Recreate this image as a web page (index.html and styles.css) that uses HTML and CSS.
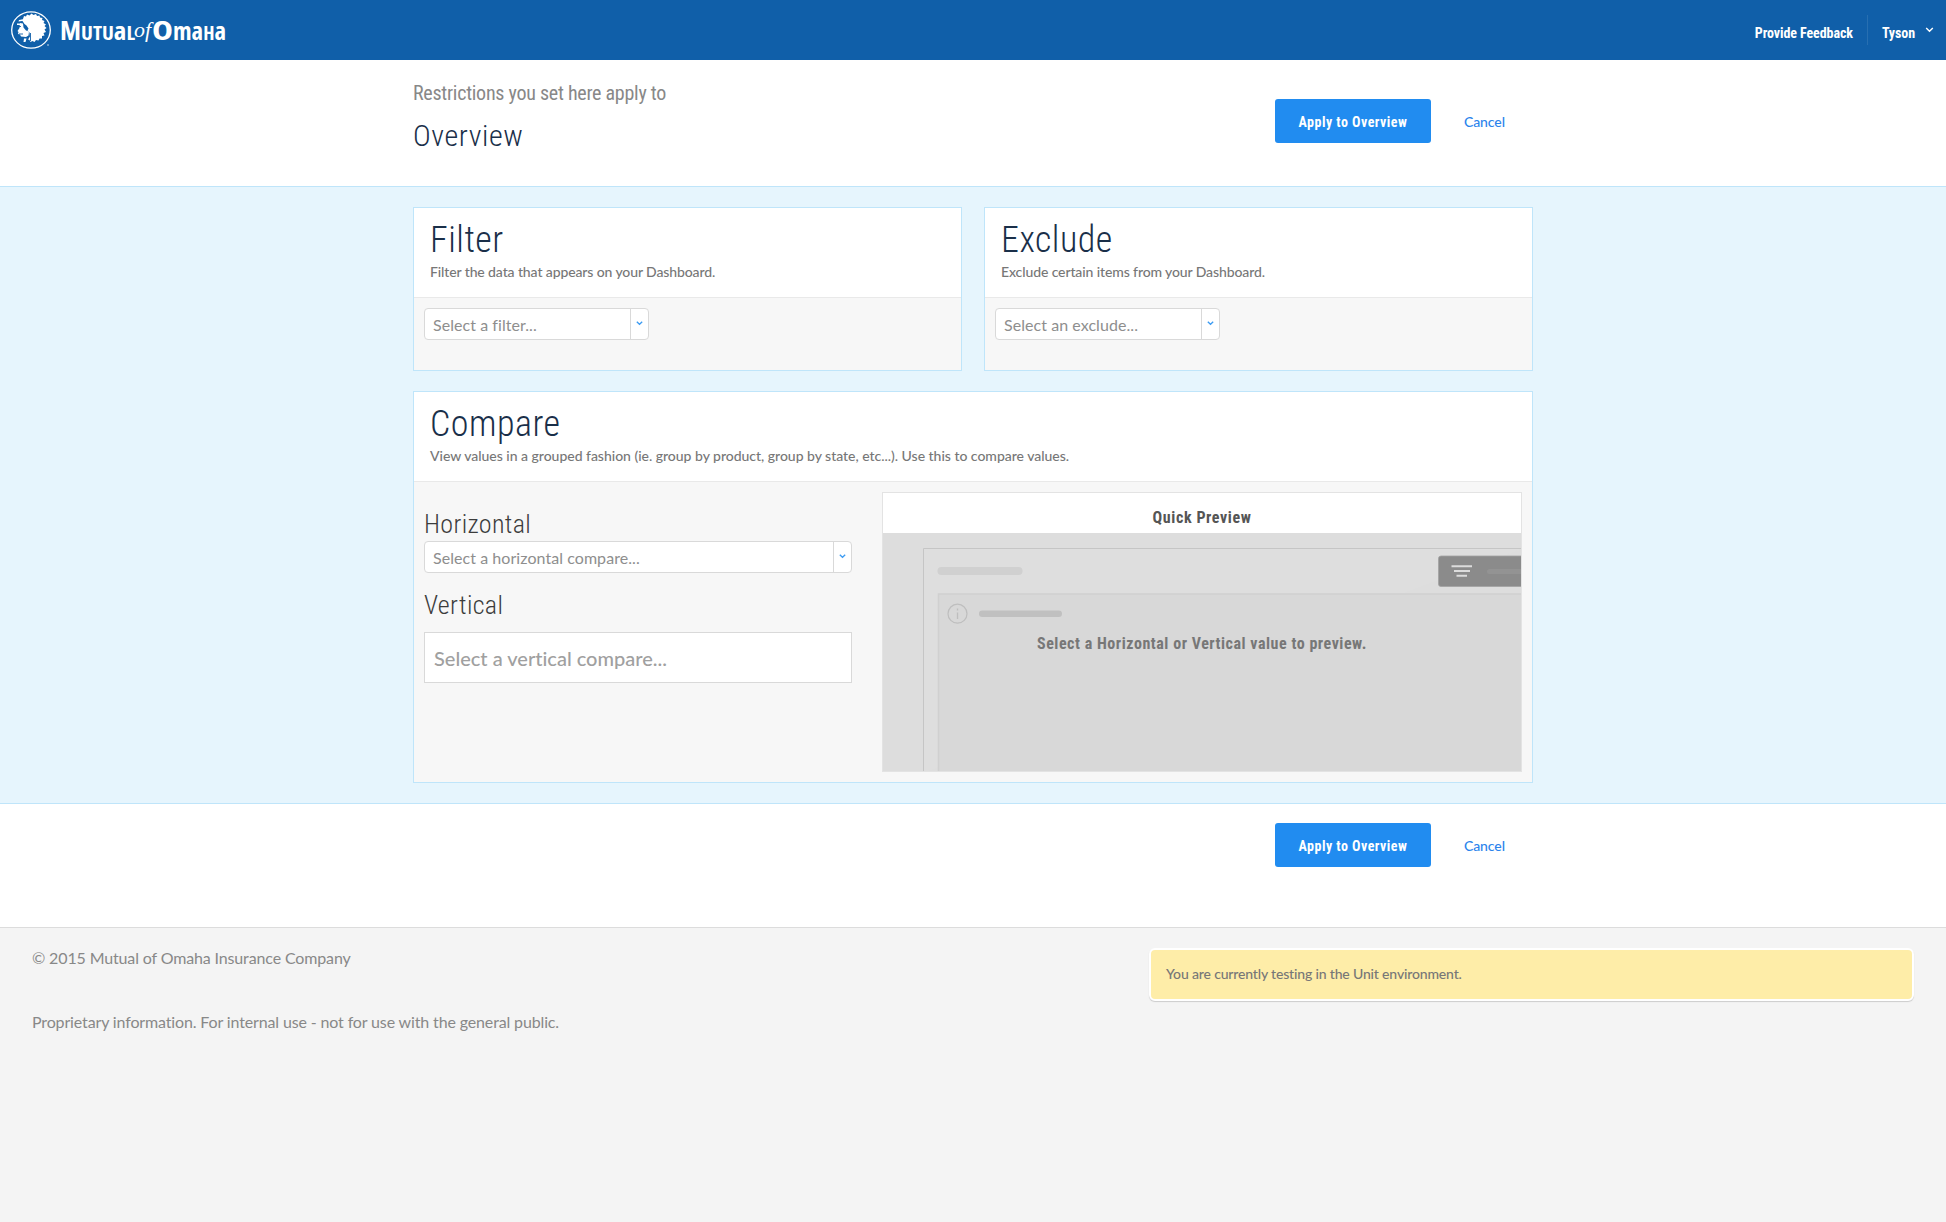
FILE: index.html
```html
<!DOCTYPE html>
<html lang="en">
<head>
<meta charset="utf-8">
<title>Mutual of Omaha – Overview restrictions</title>
<link rel="stylesheet" href="styles.css">
</head>
<body>
<header class="topbar">
  <svg class="logo" width="232" height="60" viewBox="0 0 232 60" role="img" aria-label="Mutual of Omaha">
    <ellipse cx="31" cy="30" rx="19.3" ry="18.2" fill="none" stroke="#fff" stroke-width="1.300"/>
    <path fill="#fff" d="M23 19l1-3 2 .5 1-2 2.500 1 2-2 2 1.500 2.500-1 1 2 2.500-.5.5 2 2.500.5-.5 2 2.500 1-1 2 2.500 1.500-1.500 1.500 2 2-2 1.500 1.500 2.500-2.500 1 1 2.500-2.500.5 0 2.500-2.500 0-1 2-2.500-.5-1.500 2-2-1-2 1-1-2-1.500-.5 2-3-.5-4-2-2 1-2-2-3-2-1.500-2-3-2-.5z"/>
    <path fill="#fff" d="M20 23l3 .5.5 4 2.500 3 3 1-.5 4-2.500 1.500-5-.5-1-2-2-.5.5-2-1-1 2-3zM17 23.500h3.500v1.500H17zM24 38.500h2.500l-1 3.500h-2zM19 20l3-.5v1.500l-3.500.5z"/>
    <path fill="none" stroke="#105fa9" stroke-width=".9" d="M17 26.500h4M19 34h4M30.500 33v8"/>
    <circle cx="48" cy="45" r=".7" fill="#fff"/>
    <g fill="#fff" class="wordmark">
      <text x="60" y="40" font-size="27" textLength="21" lengthAdjust="spacingAndGlyphs">M</text>
      <text x="81" y="40" font-size="19.500" textLength="54" lengthAdjust="spacingAndGlyphs">UTU<tspan font-size="25">a</tspan>L</text>
      <text x="134" y="37" class="wordmark-of" font-size="20" textLength="17" lengthAdjust="spacingAndGlyphs">of</text>
      <text x="152" y="40" font-size="27" textLength="21" lengthAdjust="spacingAndGlyphs">O</text>
      <text x="173" y="40" font-size="25" textLength="53" lengthAdjust="spacingAndGlyphs">ma<tspan font-size="19.500">H</tspan>a</text>
    </g>
  </svg>
  <nav class="topnav">
    <a class="topnav-link">Provide Feedback</a>
    <span class="topnav-rule"></span>
    <a class="topnav-link">Tyson</a>
    <svg class="topnav-chevron" width="9" height="6" viewBox="0 0 9 6"><path d="M1.200 1l3.300 3.300L7.800 1" fill="none" stroke="#fff" stroke-width="1.400"/></svg>
  </nav>
</header>

<section class="intro">
  <div class="container intro-row">
    <div>
      <p class="intro-label">Restrictions you set here apply to</p>
      <h1 class="intro-title">Overview</h1>
    </div>
    <div class="actions actions-top"><button class="btn">Apply to Overview</button><a class="cancel">Cancel</a></div>
  </div>
</section>

<main class="workspace">
  <div class="container cards">
    <section class="card">
      <div class="card-head"><h2 class="card-title">Filter</h2><p class="card-text">Filter the data that appears on your Dashboard.</p></div>
      <div class="card-body card-body-short">
        <div class="select select-small"><span class="select-text">Select a filter...</span><span class="select-arrow"><svg width="7" height="5" viewBox="0 0 7 5"><path d="M.8.8l2.700 2.500L6.200.8" fill="none" stroke="#3c9bf2" stroke-width="1.300"/></svg></span></div>
      </div>
    </section>
    <section class="card">
      <div class="card-head"><h2 class="card-title">Exclude</h2><p class="card-text">Exclude certain items from your Dashboard.</p></div>
      <div class="card-body card-body-short">
        <div class="select select-small"><span class="select-text">Select an exclude...</span><span class="select-arrow"><svg width="7" height="5" viewBox="0 0 7 5"><path d="M.8.8l2.700 2.500L6.200.8" fill="none" stroke="#3c9bf2" stroke-width="1.300"/></svg></span></div>
      </div>
    </section>
    <section class="card card-wide">
      <div class="card-head"><h2 class="card-title">Compare</h2><p class="card-text card-text-long">View values in a grouped fashion (ie. group by product, group by state, etc...). Use this to compare values.</p></div>
      <div class="card-body compare">
        <div class="compare-fields">
          <h3 class="field-title">Horizontal</h3>
          <div class="select"><span class="select-text">Select a horizontal compare...</span><span class="select-arrow"><svg width="7" height="5" viewBox="0 0 7 5"><path d="M.8.8l2.700 2.500L6.200.8" fill="none" stroke="#3c9bf2" stroke-width="1.300"/></svg></span></div>
          <h3 class="field-title field-title-second">Vertical</h3>
          <div class="multi">Select a vertical compare...</div>
        </div>
        <div class="preview">
          <h4 class="preview-title">Quick Preview</h4>
          <div class="preview-stage">
            <svg class="preview-art" width="638" height="238" viewBox="0 0 638 238">
              <path d="M40.500 240V15.500H640" fill="#dedede" stroke="#c5c5c5"/>
              <rect x="54.500" y="34" width="85" height="8" rx="4" fill="#d0d0d0"/>
              <rect x="55.500" y="61" width="600" height="190" fill="#d8d8d8" stroke="#d0d0d0" stroke-width="1.500"/>
              <circle cx="74.500" cy="80.700" r="9.500" fill="none" stroke="#bebebe" stroke-width="1.200"/>
              <path d="M74.500 79.500v6.500M74.500 75.500v2" stroke="#bebebe" stroke-width="1.300"/>
              <rect x="96" y="77.500" width="83" height="6.500" rx="3.200" fill="#c0c0c0"/>
              <rect x="555.500" y="23" width="100" height="30.500" rx="2.500" fill="#8b8b8b" stroke="#a2a2a2" stroke-width=".8"/>
              <path d="M568.500 33.300h20.500M571 38h16M573.500 42.700h10.500" stroke="#dcdcdc" stroke-width="2"/>
              <rect x="604" y="36" width="60" height="5" rx="2.500" fill="#939393"/>
            </svg>
            <p class="preview-note">Select a Horizontal or Vertical value to preview.</p>
          </div>
        </div>
      </div>
    </section>
  </div>
</main>

<section class="closing">
  <div class="container intro-row"><div></div><div class="actions"><button class="btn">Apply to Overview</button><a class="cancel">Cancel</a></div></div>
</section>

<footer class="footer">
  <div class="legal"><p>© 2015 Mutual of Omaha Insurance Company</p><p>Proprietary information. For internal use - not for use with the general public.</p></div>
  <div class="notice">You are currently testing in the Unit environment.</div>
</footer>
</body>
</html>
```
FILE: styles.css
```css
* { box-sizing: border-box; }
body { margin: 0; min-height: 1222px; display: flex; flex-direction: column; background: #fff; font-family: Lato, sans-serif; font-variant-ligatures: none; color: #888; }
h1, h2, h3, h4, p { margin: 0; }
svg { display: block; }

.topnav-link, .intro-label, .intro-title, .card-title, .field-title, .preview-title, .preview-note { font-family: Roboto, sans-serif; font-stretch: 75%; }

.topbar { height: 60px; background: #105fa9; display: flex; justify-content: space-between; }
.wordmark { font-family: "Open Sans", sans-serif; font-weight: 700; font-stretch: 75%; }
.wordmark-of { font-family: "Liberation Serif", serif; font-style: italic; font-weight: 400; }
.topnav { display: flex; align-items: center; padding-right: 12px; color: #fff; }
.topnav-link { font-size: 14px; font-weight: 700; letter-spacing: -0.08px; line-height: 20px; padding-top: 6px; }
.topnav-rule { width: 1px; height: 30px; background: #276fb1; margin: 0 14px; }
.topnav-chevron { margin-left: 10px; }

.container { width: 1120px; margin: 0 auto; }
.intro { height: 126px; }
.intro-row { display: flex; justify-content: space-between; }
.intro-label { margin-top: 18px; font-size: 20px; font-weight: 400; letter-spacing: -0.26px; line-height: 30px; }
.intro-title { margin-top: 8px; font-size: 30px; font-weight: 300; letter-spacing: 0.6px; line-height: 40px; color: #1a2f49; }
.actions { display: flex; align-items: center; height: 44px; gap: 33px; width: 258px; }
.actions-top { margin-top: 39px; }
.btn { width: 156px; height: 44px; border: 0; border-radius: 3px; padding: 2px 0 0; background: #218cf0; color: #fff; font: 700 14px/20px Roboto, sans-serif; font-stretch: 75%; letter-spacing: 0.48px; }
.cancel { padding-top: 2px; font-size: 14px; font-weight: 500; line-height: 20px; letter-spacing: -0.1px; color: #2b84ec; }

.workspace { background: #e6f5fd; border-top: 1px solid #bfe5fa; border-bottom: 1px solid #bfe5fa; padding: 20px 0; }
.cards { display: grid; grid-template-columns: 549px 549px; gap: 20px 22px; }
.card { background: #f7f7f7; border: 1px solid #bfe5fa; }
.card-wide { grid-column: 1 / 3; }
.card-head { height: 90px; padding: 10px 16px 0; background: #fff; border-bottom: 1px solid #e9e9e9; }
.card-title { font-size: 36px; font-weight: 300; letter-spacing: 0.5px; line-height: 44px; color: #1a2f49; }
.card-text { font-size: 14px; font-weight: 500; letter-spacing: -0.11px; line-height: 20px; color: #777; }
.card-text-long { letter-spacing: -0.02px; }
.card-body { padding: 10px; }
.card-body-short { height: 72px; }

.select { height: 32px; display: flex; background: #fff; border: 1px solid #d9d9d9; border-radius: 4px; }
.select-small { width: 225px; }
.select-text { flex: 1; padding: 1px 0 0 8px; font-size: 16px; letter-spacing: 0.06px; line-height: 30px; color: #8e8e8e; }
.select-arrow { width: 18px; border-left: 1px solid #d9d9d9; padding: 12px 0 0 5px; }

.compare { display: flex; gap: 30px; height: 300px; }
.compare-fields { width: 428px; padding-top: 16px; }
.field-title { margin-bottom: 1px; font-size: 26px; font-weight: 300; letter-spacing: 0.35px; line-height: 32px; color: #3c3c3c; }
.field-title-second { margin: 16px 0 11px; }
.multi { height: 51px; padding: 1px 9px 0; background: #fff; border: 1px solid #d9d9d9; font-size: 20px; font-weight: 500; line-height: 49px; color: #a0a0a0; }

.preview { width: 640px; height: 280px; background: #fff; border: 1px solid #e3e3e3; text-align: center; }
.preview-title { height: 40px; padding-top: 8px; font-size: 16px; font-weight: 700; letter-spacing: 0.6px; line-height: 33px; color: #555; }
.preview-stage { display: grid; background: #ddd; }
.preview-art, .preview-note { grid-area: 1 / 1; }
.preview-note { padding-top: 99px; font-size: 16px; font-weight: 700; letter-spacing: 0.54px; line-height: 24px; color: #777; }

.closing { height: 123px; padding-top: 19px; }
.footer { flex: 1; display: flex; justify-content: space-between; align-items: flex-start; padding: 18px 32px 0; background: #f4f4f4; border-top: 1px solid #dcdcdc; }
.legal { display: flex; flex-direction: column; gap: 40px; font-size: 16px; letter-spacing: -0.14px; line-height: 24px; color: #888; }
.notice { width: 765px; height: 53px; margin-top: 2px; padding: 0 15px; background: #feeda8; border: 2px solid #fff; border-radius: 6px; box-shadow: 0 1px 1px #ccc; font-size: 14px; font-weight: 500; letter-spacing: -0.16px; line-height: 48px; color: #777; }
```
